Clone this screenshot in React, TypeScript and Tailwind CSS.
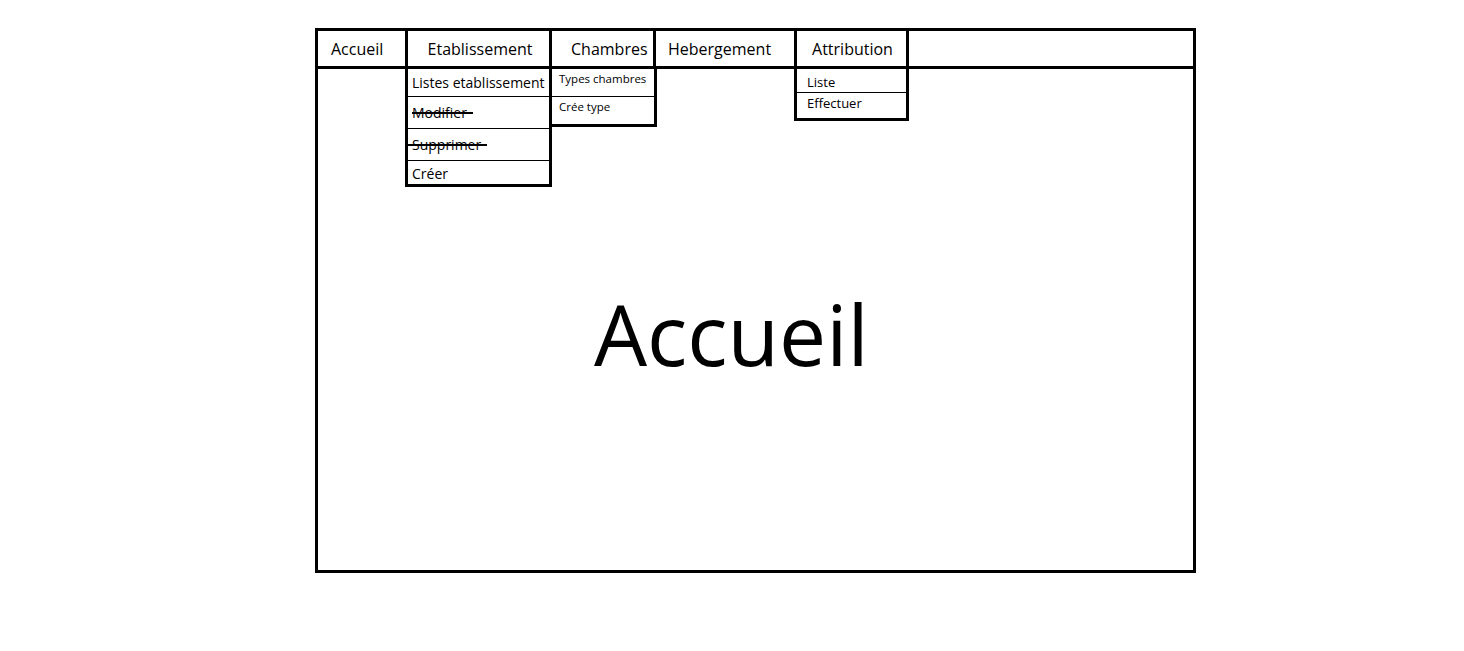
const font = { fontFamily: "'Open Sans', 'Liberation Sans', sans-serif" };

function NavCell({ label, className }: { label: string; className: string }) {
  return (
    <div className={"flex h-full items-center text-[16px] text-black " + className}>
      {label}
    </div>
  );
}

// hand drawn strike line, a little longer than the word
function Struck({ label, from, to }: { label: string; from: number; to: number }) {
  return (
    <span className="relative">
      {label}
      <span className="absolute top-[calc(50%-1px)] h-[2px] bg-black" style={{ left: from, right: to }} />
    </span>
  );
}

export default function App() {
  return (
    <div className="h-[651px] w-[1464px] bg-white" style={font}>
      <div className="pl-[315px] pt-[28px]">
        <div className="relative flex h-[545px] w-[881px] flex-col border-[3px] border-black">
          <nav className="flex h-[38px] shrink-0 border-b-[3px] border-black">
            <NavCell label="Accueil" className="w-[90px] border-r-[3px] border-black pl-[13px]" />
            <NavCell label="Etablissement" className="w-[144px] border-r-[3px] border-black justify-center pl-[3px]" />
            <NavCell label="Chambres" className="w-[104px] border-r-[3px] border-black pl-[19px]" />
            <NavCell label="Hebergement" className="w-[138px] pl-[12px]" />
            <NavCell label="Attribution" className="w-[115px] border-x-[3px] border-black justify-center pl-[2px]" />
          </nav>

          {/* Etablissement menu */}
          <div className="absolute left-[87px] top-[38px] flex w-[147px] flex-col border-x-[3px] border-b-[3px] border-black bg-white text-[14px] text-black">
            <div className="flex h-[28px] items-center border-b border-black pl-[4px]">Listes etablissement</div>
            <div className="flex h-[32px] items-center border-b border-black pl-[4px]">
              <Struck label="Modifier" from={0} to={-6} />
            </div>
            <div className="flex h-[32px] items-center border-b border-black pl-[4px]">
              <Struck label="Supprimer" from={-5} to={-6} />
            </div>
            <div className="flex h-[23px] items-end pl-[4px] leading-[20px]">Créer</div>
          </div>

          {/* Chambres menu */}
          <div className="absolute left-[231px] top-[38px] flex w-[108px] flex-col border-x-[3px] border-b-[3px] border-black bg-white text-[11.5px] text-black">
            <div className="h-[28px] border-b border-black pl-[7px] pt-[1px]">Types chambres</div>
            <div className="h-[27px] pl-[7px] pt-[1px]">Crée type</div>
          </div>

          {/* Attribution menu */}
          <div className="absolute left-[476px] top-[38px] flex w-[115px] flex-col border-x-[3px] border-b-[3px] border-black bg-white text-[13px] text-black">
            <div className="flex h-[24px] items-end border-b border-black pl-[10px] leading-[19px]">Liste</div>
            <div className="h-[25px] pl-[10px] leading-[20px]">Effectuer</div>
          </div>

          <main className="flex flex-1 items-start pl-[276px] pt-[223px]">
            <h1 className="text-[84px] leading-none text-black">Accueil</h1>
          </main>
        </div>
      </div>
    </div>
  );
}
